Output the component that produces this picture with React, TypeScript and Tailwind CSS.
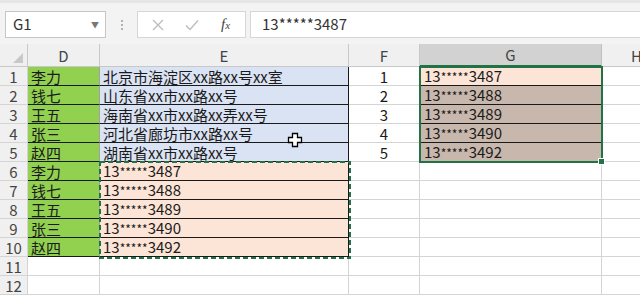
import React from "react";

const names = ["李力", "钱七", "王五", "张三", "赵四"];
const addrs = [
  "北京市海淀区xx路xx号xx室",
  "山东省xx市xx路xx号",
  "海南省xx市xx路xx弄xx号",
  "河北省廊坊市xx路xx号",
  "湖南省xx市xx路xx号",
];
const tails = ["3487", "3488", "3489", "3490", "3492"];

const font = { fontFamily: '"Noto Sans CJK SC", "Noto Sans", sans-serif' };

const Phone = ({ tail }: { tail: string }) => (
  <span>
    13<span className="text-[12px]">*****</span>
    {tail}
  </span>
);

const Cell = ({
  w,
  className = "",
  children,
}: {
  w: string;
  className?: string;
  children?: React.ReactNode;
}) => (
  <div
    className={`${w} h-[19px] shrink-0 border-r border-b flex items-end overflow-hidden whitespace-nowrap text-[15px] leading-[17px] text-[#1a1a1a] ${className}`}
  >
    {children}
  </div>
);

const Row = ({ n }: { n: number }) => {
  const i = (n - 1) % 5;
  const top = n <= 5;
  const bottom = n >= 6 && n <= 10;
  return (
    <div className="flex">
      <Cell w="w-[28px]" className="bg-[#f0f0f0] border-[#d4d4d4] justify-center text-[#444]">
        {n}
      </Cell>
      {n <= 10 ? (
        <Cell w="w-[72px]" className="bg-[#92d050] border-b-[#1a1a1a] border-r-[#a0a0a0] pl-[3px]">
          {names[i]}
        </Cell>
      ) : (
        <Cell w="w-[72px]" className="border-[#d4d4d4]" />
      )}
      {top && (
        <Cell w="w-[249px]" className="bg-[#dae3f3] border-[#1a1a1a] pl-[3px]">
          {addrs[i]}
        </Cell>
      )}
      {bottom && (
        <Cell w="w-[249px]" className="bg-[#fce4d6] border-[#1a1a1a] pl-[3px]">
          <Phone tail={tails[i]} />
        </Cell>
      )}
      {n > 10 && <Cell w="w-[249px]" className="border-[#d4d4d4]" />}
      <Cell w="w-[71px]" className="border-[#d4d4d4] justify-center">
        {top ? n : ""}
      </Cell>
      {top ? (
        <Cell
          w="w-[182px]"
          className={`${n === 1 ? "bg-[#fce4d6]" : "bg-[#c8b7ac]"} border-[#1a1a1a] pl-[4px]`}
        >
          <Phone tail={tails[i]} />
        </Cell>
      ) : (
        <Cell w="w-[182px]" className="border-[#d4d4d4]" />
      )}
      <Cell w="w-[70px]" className="border-[#d4d4d4]" />
    </div>
  );
};

const HeaderCell = ({ w, label, active }: { w: string; label?: string; active?: boolean }) => (
  <div
    className={`${w} h-[23px] shrink-0 border-r border-b flex items-end justify-center pb-[1px] text-[15px] leading-[18px] ${
      active ? "bg-[#d2d2d2] border-b-[#217346] border-b-2 border-r-[#c0c0c0]" : "bg-[#f0f0f0] border-[#c8c8c8]"
    } text-[#444]`}
  >
    {label}
  </div>
);

export default function App() {
  const rows = Array.from({ length: 12 }, (_, k) => k + 1);
  return (
    <div className="w-[640px] h-[295px] overflow-hidden bg-white" style={font}>
      {/* formula bar */}
      <div className="h-[44px] bg-[#f3f3f3] border-t-[3px] border-[#e6e6e6] flex items-start pt-[8px] pl-[5px]">
        <div className="w-[101px] h-[27px] bg-white border border-[#c6c6c6] flex items-center justify-between pl-[7px] pr-[6px] text-[15px] text-[#333]">
          <span>G1</span>
          <span className="text-[8px] text-[#777]">▼</span>
        </div>
        <div className="w-[31px] h-[27px] flex flex-col items-center justify-center gap-[2px]">
          <span className="w-[2px] h-[2px] bg-[#b0b0b0]" />
          <span className="w-[2px] h-[2px] bg-[#b0b0b0]" />
          <span className="w-[2px] h-[2px] bg-[#b0b0b0]" />
        </div>
        <div className="w-[109px] h-[27px] bg-white border border-[#d6d6d6] flex items-center">
          <svg width="12" height="12" viewBox="0 0 12 12" className="ml-[14px]">
            <path d="M1 1L11 11M11 1L1 11" stroke="#bdbdbd" strokeWidth="1.4" />
          </svg>
          <svg width="14" height="12" viewBox="0 0 14 12" className="ml-[21px]">
            <path d="M1 6.5L5 10.5L13 1.5" stroke="#bdbdbd" strokeWidth="1.4" fill="none" />
          </svg>
          <span
            className="ml-[22px] text-[15px] italic text-[#444]"
            style={{ fontFamily: '"Liberation Serif", serif' }}
          >
            f<span className="text-[11px]">x</span>
          </span>
        </div>
        <div className="ml-[4px] flex-1 h-[27px] bg-white border border-[#d6d6d6] border-r-0 flex items-center pl-[11px] text-[15px] text-[#333]">
          13*****3487
        </div>
      </div>

      {/* column headers */}
      <div className="flex">
        <div className="w-[28px] h-[23px] shrink-0 bg-[#f0f0f0] border-r border-b border-[#c8c8c8] relative">
          <svg width="10" height="10" viewBox="0 0 10 10" className="absolute right-[4px] bottom-[3px]">
            <path d="M10 0L10 10L0 10Z" fill="#c8c8c8" />
          </svg>
        </div>
        <HeaderCell w="w-[72px]" label="D" />
        <HeaderCell w="w-[249px]" label="E" />
        <HeaderCell w="w-[71px]" label="F" />
        <HeaderCell w="w-[182px]" label="G" active />
        <HeaderCell w="w-[70px]" label="H" />
      </div>

      {/* grid */}
      <div className="relative">
        {rows.map((n) => (
          <Row key={n} n={n} />
        ))}

        {/* active selection G1:G5 */}
        <div className="absolute left-[419px] top-[-1px] w-[184px] h-[97px] border-2 border-[#217346] pointer-events-none" />
        <div className="absolute left-[598px] top-[91px] w-[7px] h-[7px] bg-[#217346] border border-white" />

        {/* copy marquee E6:E10 */}
        <svg className="absolute left-[99px] top-[94px]" width="252" height="98">
          <rect
            x="1"
            y="1"
            width="250"
            height="96"
            fill="none"
            stroke="#217346"
            strokeWidth="2"
            strokeDasharray="5 3"
          />
        </svg>

        {/* cursor */}
        <svg className="absolute left-[287px] top-[65px]" width="16" height="16" viewBox="0 0 16 16">
          <path
            d="M5.5 1.5H10.5V5.5H14.5V10.5H10.5V14.5H5.5V10.5H1.5V5.5H5.5Z"
            fill="white"
            stroke="black"
            strokeWidth="1.3"
          />
        </svg>
      </div>
    </div>
  );
}
